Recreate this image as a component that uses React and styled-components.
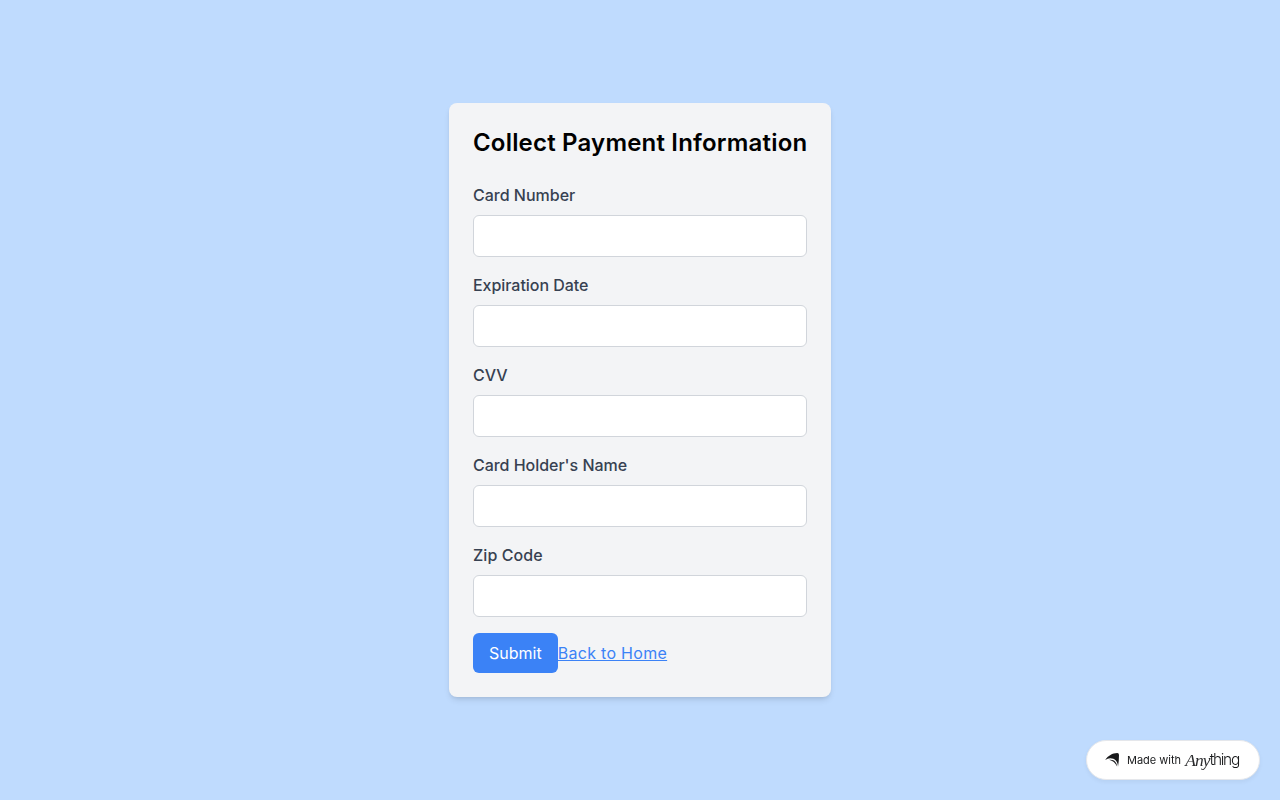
import React from "react";
import styled, { createGlobalStyle } from "styled-components";

const GlobalStyle = createGlobalStyle`
  *, *::before, *::after { box-sizing: border-box; }
  body { margin: 0; font-family: Inter, "Liberation Sans", sans-serif; font-size: 16px; line-height: 24px; }
`;
const Page = styled.main`
  min-height: 100vh;
  display: flex;
  align-items: center;
  justify-content: center;
  background: #bfdbfe;
`;
const Card = styled.form`
  width: 382px;
  padding: 24px;
  border-radius: 8px;
  background: #f3f4f6;
  box-shadow: 0 4px 6px -1px rgba(0, 0, 0, 0.1), 0 2px 4px -2px rgba(0, 0, 0, 0.1);
`;
const Title = styled.h2`
  margin: 0 0 24px;
  font-size: 24px;
  line-height: 32px;
  font-weight: 600;
  letter-spacing: 0.19px;
  white-space: nowrap;
  color: #000;
`;
const Field = styled.div`
  margin-bottom: 16px;
`;
const Label = styled.label`
  display: block;
  margin-bottom: 8px;
  font-weight: 500;
  letter-spacing: ${({ $tracking }) => $tracking || "normal"};
  color: #374151;
`;
const Input = styled.input`
  display: block;
  width: 100%;
  height: 42px;
  padding: 8px;
  border: 1px solid #d1d5db;
  border-radius: 6px;
  background: #fff;
  font: inherit;
`;
const Actions = styled.div`
  display: flex;
  align-items: center;
`;
const Submit = styled.button`
  padding: 8px 16px;
  border: 0;
  border-radius: 6px;
  background: #3b82f6;
  color: #fff;
  font: inherit;
`;
const HomeLink = styled.a`
  color: #3b82f6;
  letter-spacing: 0.3px;
  text-decoration: underline;
`;
const Badge = styled.a`
  position: fixed;
  right: 20px;
  bottom: 20px;
  display: flex;
  align-items: center;
  width: 174px;
  height: 40px;
  padding-left: 18px;
  border: 1px solid #e5e7eb;
  border-radius: 20px;
  background: #fff;
  box-shadow: 0 2px 4px rgba(0, 0, 0, 0.05);
  color: #18191b;
  text-decoration: none;
`;
const BadgeText = styled.span`
  margin: 0 4px 0 8px;
  font-size: 11px;
  line-height: 16px;
  white-space: nowrap;
`;
const Script = styled.span`
  font: italic 17.5px/20px "Liberation Serif", serif;
  letter-spacing: -0.9px;
  color: #2b2c2e;
`;
const Sans = styled.span`
  font-size: 15.5px;
  line-height: 20px;
  font-weight: 350;
  letter-spacing: -1.3px;
`;

const fields = [
  { name: "Card Number" },
  { name: "Expiration Date", tracking: "-0.05px" },
  { name: "CVV" },
  { name: "Card Holder's Name", tracking: "-0.03px" },
  { name: "Zip Code", tracking: "0.08px" },
];

export default function App() {
  return (
    <Page>
      <GlobalStyle />
      <Card>
        <Title>Collect Payment Information</Title>
        {fields.map(({ name, tracking }) => (
          <Field key={name}>
            <Label htmlFor={name} $tracking={tracking}>{name}</Label>
            <Input id={name} />
          </Field>
        ))}
        <Actions>
          <Submit type="button">Submit</Submit>
          <HomeLink href="#">Back to Home</HomeLink>
        </Actions>
      </Card>
      <Badge href="#">
        <svg width="14" height="16" viewBox="0 0 14 16" fill="#18191b">
          <path d="M0.2 8C3 3.6 7.5 1.1 12.3 1Q14 1 14 3Q14 9 13 14.8C13 9.5 9.8 6.2 5.3 6.2Q2.5 6.4 0.2 8Z" />
          <path d="M4 7.8C8.7 6.9 11.8 10 12.1 14.5C10.2 10.9 8 8.7 4 7.8Z" />
        </svg>
        <BadgeText>Made with</BadgeText>
        <Script>Any</Script>
        <Sans>thing</Sans>
      </Badge>
    </Page>
  );
}
